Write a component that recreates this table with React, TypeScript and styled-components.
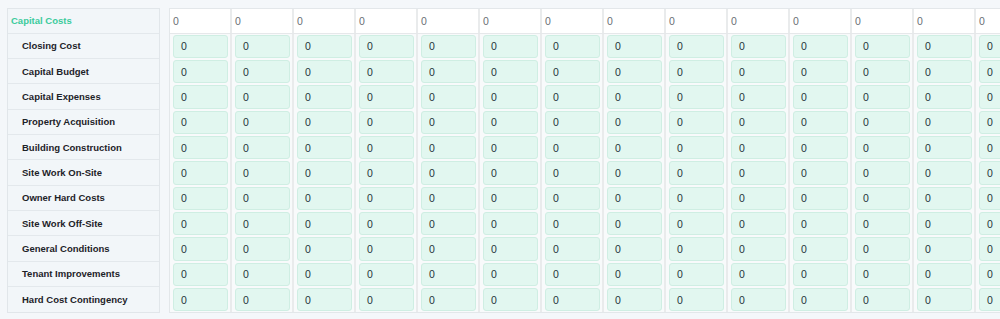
import React from "react";
import styled, { createGlobalStyle } from "styled-components";

const Global = createGlobalStyle`
  html, body { margin: 0; padding: 0; background: #f4f7fa; }
  body { font-family: "Liberation Sans", Arial, Helvetica, sans-serif; }
  * { box-sizing: border-box; }
`;

const Page = styled.div`
  display: flex;
  gap: 9px;
  padding: 8px 0 0 7px;
  width: 1000px;
  height: 319px;
  overflow: hidden;
`;

const LabelPanel = styled.div`
  flex: none;
  width: 153px;
  background: #f2f6f9;
  border: 1px solid #e1e6ea;
  align-self: flex-start;
`;

const LabelRow = styled.div<{ $head?: boolean }>`
  height: ${(p) => (p.$head ? "24.5px" : "25.35px")};
  display: flex;
  align-items: center;
  padding-left: ${(p) => (p.$head ? "3px" : "14px")};
  font-size: 9.5px;
  font-weight: 700;
  color: ${(p) => (p.$head ? "#3ccb9c" : "#1d2228")};
  border-bottom: 1px solid #e3e8ec;
  &:last-child { border-bottom: none; }
`;

const Grid = styled.div`
  flex: 1;
  min-width: 0;
  overflow: hidden;
  align-self: flex-start;
  border-top: 1px solid #e3e7ea;
  border-left: 1px solid #e3e7ea;
  border-bottom: 1px solid #e3e7ea;
  background: #f8fafb;
`;

const GridRow = styled.div<{ $head?: boolean }>`
  display: flex;
  height: ${(p) => (p.$head ? "24.5px" : "25.35px")};
  border-bottom: ${(p) => (p.$head ? "1px solid #e6e8ea" : "none")};
`;

const HeadCell = styled.div`
  flex: none;
  width: 62px;
  background: #ffffff;
  border-right: 2px solid #e9ebec;
  display: flex;
  align-items: center;
  padding-left: 3px;
  font-size: 10.5px;
  color: #6b7075;
`;

const Cell = styled.div`
  flex: none;
  width: 62px;
  border-right: 2px solid #e9ebec;
  padding: 1px 2px 1px 3px;
  display: flex;
`;

const ValueBox = styled.div`
  flex: 1;
  background: #e2f7f0;
  border: 1px solid #cfeee3;
  border-radius: 3px;
  display: flex;
  align-items: center;
  padding-left: 7px;
  font-size: 10.5px;
  color: #26343b;
`;

const labels = [
  "Closing Cost",
  "Capital Budget",
  "Capital Expenses",
  "Property Acquisition",
  "Building Construction",
  "Site Work On-Site",
  "Owner Hard Costs",
  "Site Work Off-Site",
  "General Conditions",
  "Tenant Improvements",
  "Hard Cost Contingency",
];

const COLS = 14;
const cols = Array.from({ length: COLS }, (_, i) => i);

export default function App() {
  return (
    <>
      <Global />
      <Page>
        <LabelPanel>
          <LabelRow $head>Capital Costs</LabelRow>
          {labels.map((l) => (
            <LabelRow key={l}>{l}</LabelRow>
          ))}
        </LabelPanel>
        <Grid>
          <GridRow $head>
            {cols.map((c) => (
              <HeadCell key={c}>0</HeadCell>
            ))}
          </GridRow>
          {labels.map((l) => (
            <GridRow key={l}>
              {cols.map((c) => (
                <Cell key={c}>
                  <ValueBox>0</ValueBox>
                </Cell>
              ))}
            </GridRow>
          ))}
        </Grid>
      </Page>
    </>
  );
}
